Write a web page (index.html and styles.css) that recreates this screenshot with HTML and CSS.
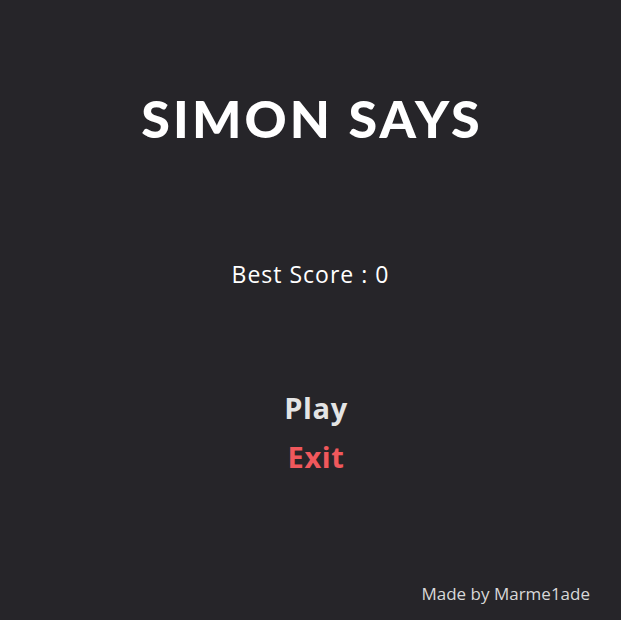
FILE: index.html
```html
<!DOCTYPE html>
<html>
<head>
<meta charset="utf-8">
<link rel="stylesheet" href="styles.css">
</head>
<body>
<div class="screen">
  <h1 class="title">SIMON SAYS</h1>
  <p class="best">Best Score : 0</p>
  <nav class="menu">
    <div class="item play">Play</div>
    <div class="item exit">Exit</div>
  </nav>
  <footer class="credit">Made by Marme1ade</footer>
</div>
</body>
</html>
```
FILE: styles.css
```css
html, body {
  margin: 0;
  padding: 0;
  background: #262529;
}
.screen {
  width: 621px;
  height: 620px;
  display: flex;
  flex-direction: column;
  align-items: center;
  position: relative;
  background: #262529;
}
.title {
  margin: 88px 0 0 0;
  padding-left: 3px;
  font-family: "Lato", sans-serif;
  font-weight: 900;
  font-size: 52px;
  letter-spacing: 3.1px;
  color: #ffffff;
  line-height: 60px;
}
.best {
  margin: 110px 0 0 0;
  font-family: "Open Sans", sans-serif;
  font-size: 23px;
  letter-spacing: 1px;
  color: #ffffff;
  line-height: 32px;
}
.menu {
  margin-top: 99px;
  padding-left: 11px;
  display: flex;
  flex-direction: column;
  align-items: center;
  gap: 11px;
}
.item {
  font-family: "Open Sans", sans-serif;
  font-weight: 700;
  font-size: 29px;
  letter-spacing: 0.6px;
  line-height: 38px;
}
.play { color: #e4e4e4; }
.exit { color: #f0585c; }
.credit {
  position: absolute;
  right: 31px;
  bottom: 15px;
  font-family: "Open Sans", sans-serif;
  font-size: 17px;
  color: #d8d8d8;
}
```
